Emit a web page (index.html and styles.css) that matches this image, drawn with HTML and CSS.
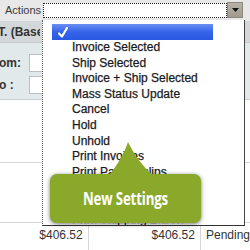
FILE: index.html
```html
<!DOCTYPE html>
<html>
<head>
<meta charset="utf-8">
<link rel="stylesheet" href="styles.css">
</head>
<body>
<div class="page">
  <div class="topbar">
    <span class="label">Actions</span>
    <div class="select">
      <div class="select-field"></div>
      <div class="select-btn"><svg width="7" height="4" viewBox="0 0 7 4"><path d="M0 0H7L3.5 4Z" fill="#111"/></svg></div>
    </div>
  </div>
  <div class="filters">
    <div class="filters-head"><span class="head-text">T. (Base)</span></div>
    <div class="filters-body">
      <div class="frow"><span class="flabel">om:</span><span class="finput"></span></div>
      <div class="frow"><span class="flabel">o :</span><span class="finput"></span></div>
    </div>
  </div>
  <div class="grid">
    <div class="grow g1"></div>
    <div class="grow g2"></div>
    <div class="grow g3"><span class="c c1">$406.52</span><span class="c c2">$406.52</span><span class="c c3">Pending</span></div>
  </div>

  <div class="menu">
    <ul class="menu-list">
      <li class="item selected"><svg class="check" width="10" height="11" viewBox="0 0 10 11"><path d="M1 6.5L4 9.5L9 1" fill="none" stroke="#fff" stroke-width="2.2" stroke-linecap="round" stroke-linejoin="round"/></svg></li>
      <li class="item">Invoice Selected</li>
      <li class="item">Ship Selected</li>
      <li class="item">Invoice + Ship Selected</li>
      <li class="item">Mass Status Update</li>
      <li class="item">Cancel</li>
      <li class="item">Hold</li>
      <li class="item">Unhold</li>
      <li class="item">Print Invoices</li>
      <li class="item">Print Packingslips</li>
      <li class="item">Print All</li>
      <li class="item">Create Shipping Labels</li>
      <li class="item">Print Shipping Labels</li>
    </ul>
  </div>

  <div class="callout">
    <svg class="tail" width="46" height="34" viewBox="0 0 46 34"><path d="M0 34C9 24 16 12 20 0C26 12 34 24 46 34Z" fill="#8aa92b"/></svg>
    <span class="callout-text">New Settings</span>
  </div>
</div>
</body>
</html>
```

FILE: styles.css
```css
* { box-sizing: border-box; }
html, body { margin: 0; padding: 0; }
body {
  width: 250px;
  height: 250px;
  overflow: hidden;
  background: #fff;
  font-family: "Liberation Sans", Arial, sans-serif;
  color: #333;
}
.page {
  position: relative;
  width: 250px;
  height: 250px;
  overflow: hidden;
}
.topbar {
  height: 21px;
  background: #e8e8e8;
  display: flex;
  align-items: flex-start;
  padding-top: 2px;
}
.label {
  width: 43px;
  padding-left: 5px;
  font-size: 11px;
  line-height: 16px;
  color: #3a3a3a;
}
.select {
  width: 200px;
  height: 16px;
  display: flex;
}
.select-field {
  flex: 1;
  background: #fff;
  border: 1px dotted #222;
  margin-top: 1px;
  height: 15px;
}
.select-btn {
  width: 16px;
  height: 16px;
  background: linear-gradient(#b7b1a6, #a19b8f);
  border: 1px solid #8f897d;
  display: flex;
  align-items: center;
  justify-content: center;
}
.filters {
  height: 79px;
  border-bottom: 1px solid #c9cfd2;
}
.filters-head {
  height: 22px;
  background: #d3d7d9;
  border-bottom: 1px solid #c3c9cc;
  display: flex;
  align-items: center;
  overflow: hidden;
}
.head-text {
  width: 42px;
  overflow: hidden;
  white-space: nowrap;
  font-size: 12px;
  font-weight: bold;
  color: #333;
  margin-left: -2px;
  padding-top: 1px;
}
.filters-body {
  height: 56px;
  background: #e2e9eb;
  padding-top: 11px;
  display: flex;
  flex-direction: column;
  gap: 4px;
}
.frow {
  height: 18px;
  display: flex;
  align-items: center;
}
.flabel {
  width: 30px;
  font-size: 12px;
  font-weight: bold;
  color: #333;
  white-space: nowrap;
  margin-left: -1px;
}
.finput {
  width: 40px;
  height: 18px;
  background: #fff;
  border: 1px solid #b9bfc2;
}
.grid {
  display: flex;
  flex-direction: column;
}
.grow { border-bottom: 1px solid #d6d6d6; }
.g1 { height: 63px; }
.g2 { height: 60px; }
.g3 {
  height: 30px;
  border-bottom: none;
  display: flex;
  font-size: 12px;
  color: #333;
}
.c { padding-top: 5px; height: 30px; }
.c1 { width: 90px; text-align: right; padding-right: 5px; border-right: 1px solid #d6d6d6; }
.c2 { width: 114px; text-align: right; padding-right: 5px; border-right: 1px solid #d6d6d6; }
.c3 { padding-left: 5px; white-space: nowrap; }

.menu {
  position: absolute;
  left: 42px;
  top: 20px;
  width: 203px;
  height: 206px;
  background: #fff;
  border-left: 1px dotted #555;
  border-right: 1px solid #444;
  border-bottom: 1px solid #333;
  overflow: hidden;
}
.menu-list {
  list-style: none;
  margin: 0;
  padding: 4px 0 0 9px;
}
.item {
  width: 161px;
  height: 15.6px;
  line-height: 15.6px;
  padding-left: 20px;
  font-size: 12px;
  color: #1a1a1a;
  -webkit-text-stroke: 0.25px #1a1a1a;
  white-space: nowrap;
}
.selected {
  height: 16px;
  background: linear-gradient(#6a8ff3, #3563e9 50%, #2a58e2);
  padding-left: 6px;
  display: flex;
  align-items: center;
}
.callout {
  position: absolute;
  left: 50px;
  top: 174px;
  width: 151px;
  height: 49px;
  background: #8aa92b;
  border-radius: 7px;
  box-shadow: 0 1px 4px rgba(0,0,0,0.55);
  display: flex;
  align-items: center;
  justify-content: center;
}
.tail {
  position: absolute;
  left: 58px;
  top: -32px;
}
.callout-text {
  display: inline-block;
  color: #fff;
  font-family: "Open Sans", "Liberation Sans", sans-serif;
  font-weight: bold;
  font-size: 17px;
  transform: scaleX(0.78);
  white-space: nowrap;
  letter-spacing: -0.2px;
}
```
